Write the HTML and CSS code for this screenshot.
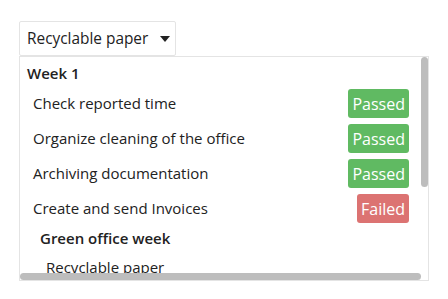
FILE: index.html
```html
<!DOCTYPE html>
<html>
<head>
<meta charset="utf-8">
<link rel="stylesheet" href="styles.css">
</head>
<body>
<div class="page">
  <button class="dropdown">Recyclable paper <span class="caret"></span></button>
  <div class="panel">
    <div class="content">
      <div class="group-title">Week 1</div>
      <div class="row"><span class="label">Check reported time</span><span class="badge passed">Passed</span></div>
      <div class="row"><span class="label">Organize cleaning of the office</span><span class="badge passed">Passed</span></div>
      <div class="row"><span class="label">Archiving documentation</span><span class="badge passed">Passed</span></div>
      <div class="row"><span class="label">Create and send Invoices</span><span class="badge failed">Failed</span></div>
      <div class="subgroup-title">Green office week</div>
      <div class="subrow">Recyclable paper</div>
    </div>
    <div class="vscroll"></div>
    <div class="hscroll"></div>
  </div>
</div>
</body>
</html>
```
FILE: styles.css
```css
html, body {
  margin: 0;
  padding: 0;
  background: #fff;
}
body {
  font-family: "Open Sans", "Noto Sans", sans-serif;
  font-size: 15px;
  color: #222;
}
.page {
  padding: 21px 0 0 19px;
}
.dropdown {
  display: flex;
  align-items: center;
  gap: 12px;
  height: 35px;
  width: 157px;
  box-sizing: border-box;
  padding: 0 7px 0 7px;
  border: 1px solid #e4e4e4;
  border-radius: 2px;
  background: #fff;
  font: inherit;
  font-size: 15.4px;
  color: #222;
  white-space: nowrap;
}
.caret {
  width: 0;
  height: 0;
  border-left: 5px solid transparent;
  border-right: 5px solid transparent;
  border-top: 6px solid #222;
}
.panel {
  position: relative;
  width: 410px;
  height: 225px;
  box-sizing: border-box;
  border: 1px solid #e4e4e4;
  overflow: hidden;
}
.content {
  padding: 4px 19px 0 7px;
}
.group-title {
  font-weight: 600;
  line-height: 24px;
}
.row {
  display: flex;
  justify-content: space-between;
  align-items: center;
  height: 35px;
  padding-left: 6px;
}
.badge {
  display: flex;
  align-items: center;
  align-self: flex-start;
  margin-top: 4px;
  height: 29px;
  padding: 0 4px;
  border-radius: 3px;
  color: #fff;
  font-size: 16px;
}
.passed { background: #60ba62; }
.failed { background: #dc7372; }
.subgroup-title {
  font-weight: 600;
  line-height: 24px;
  padding-left: 13px;
  margin-top: 1px;
}
.subrow {
  line-height: 24px;
  padding-left: 19px;
  margin-top: 5px;
}
.vscroll {
  position: absolute;
  right: 0;
  top: 0;
  width: 7px;
  height: 130px;
  border-radius: 4px;
  background: #bdbdbd;
}
.hscroll {
  position: absolute;
  left: 0;
  bottom: 0;
  width: 401px;
  height: 7px;
  border-radius: 4px;
  background: #bdbdbd;
}
```
